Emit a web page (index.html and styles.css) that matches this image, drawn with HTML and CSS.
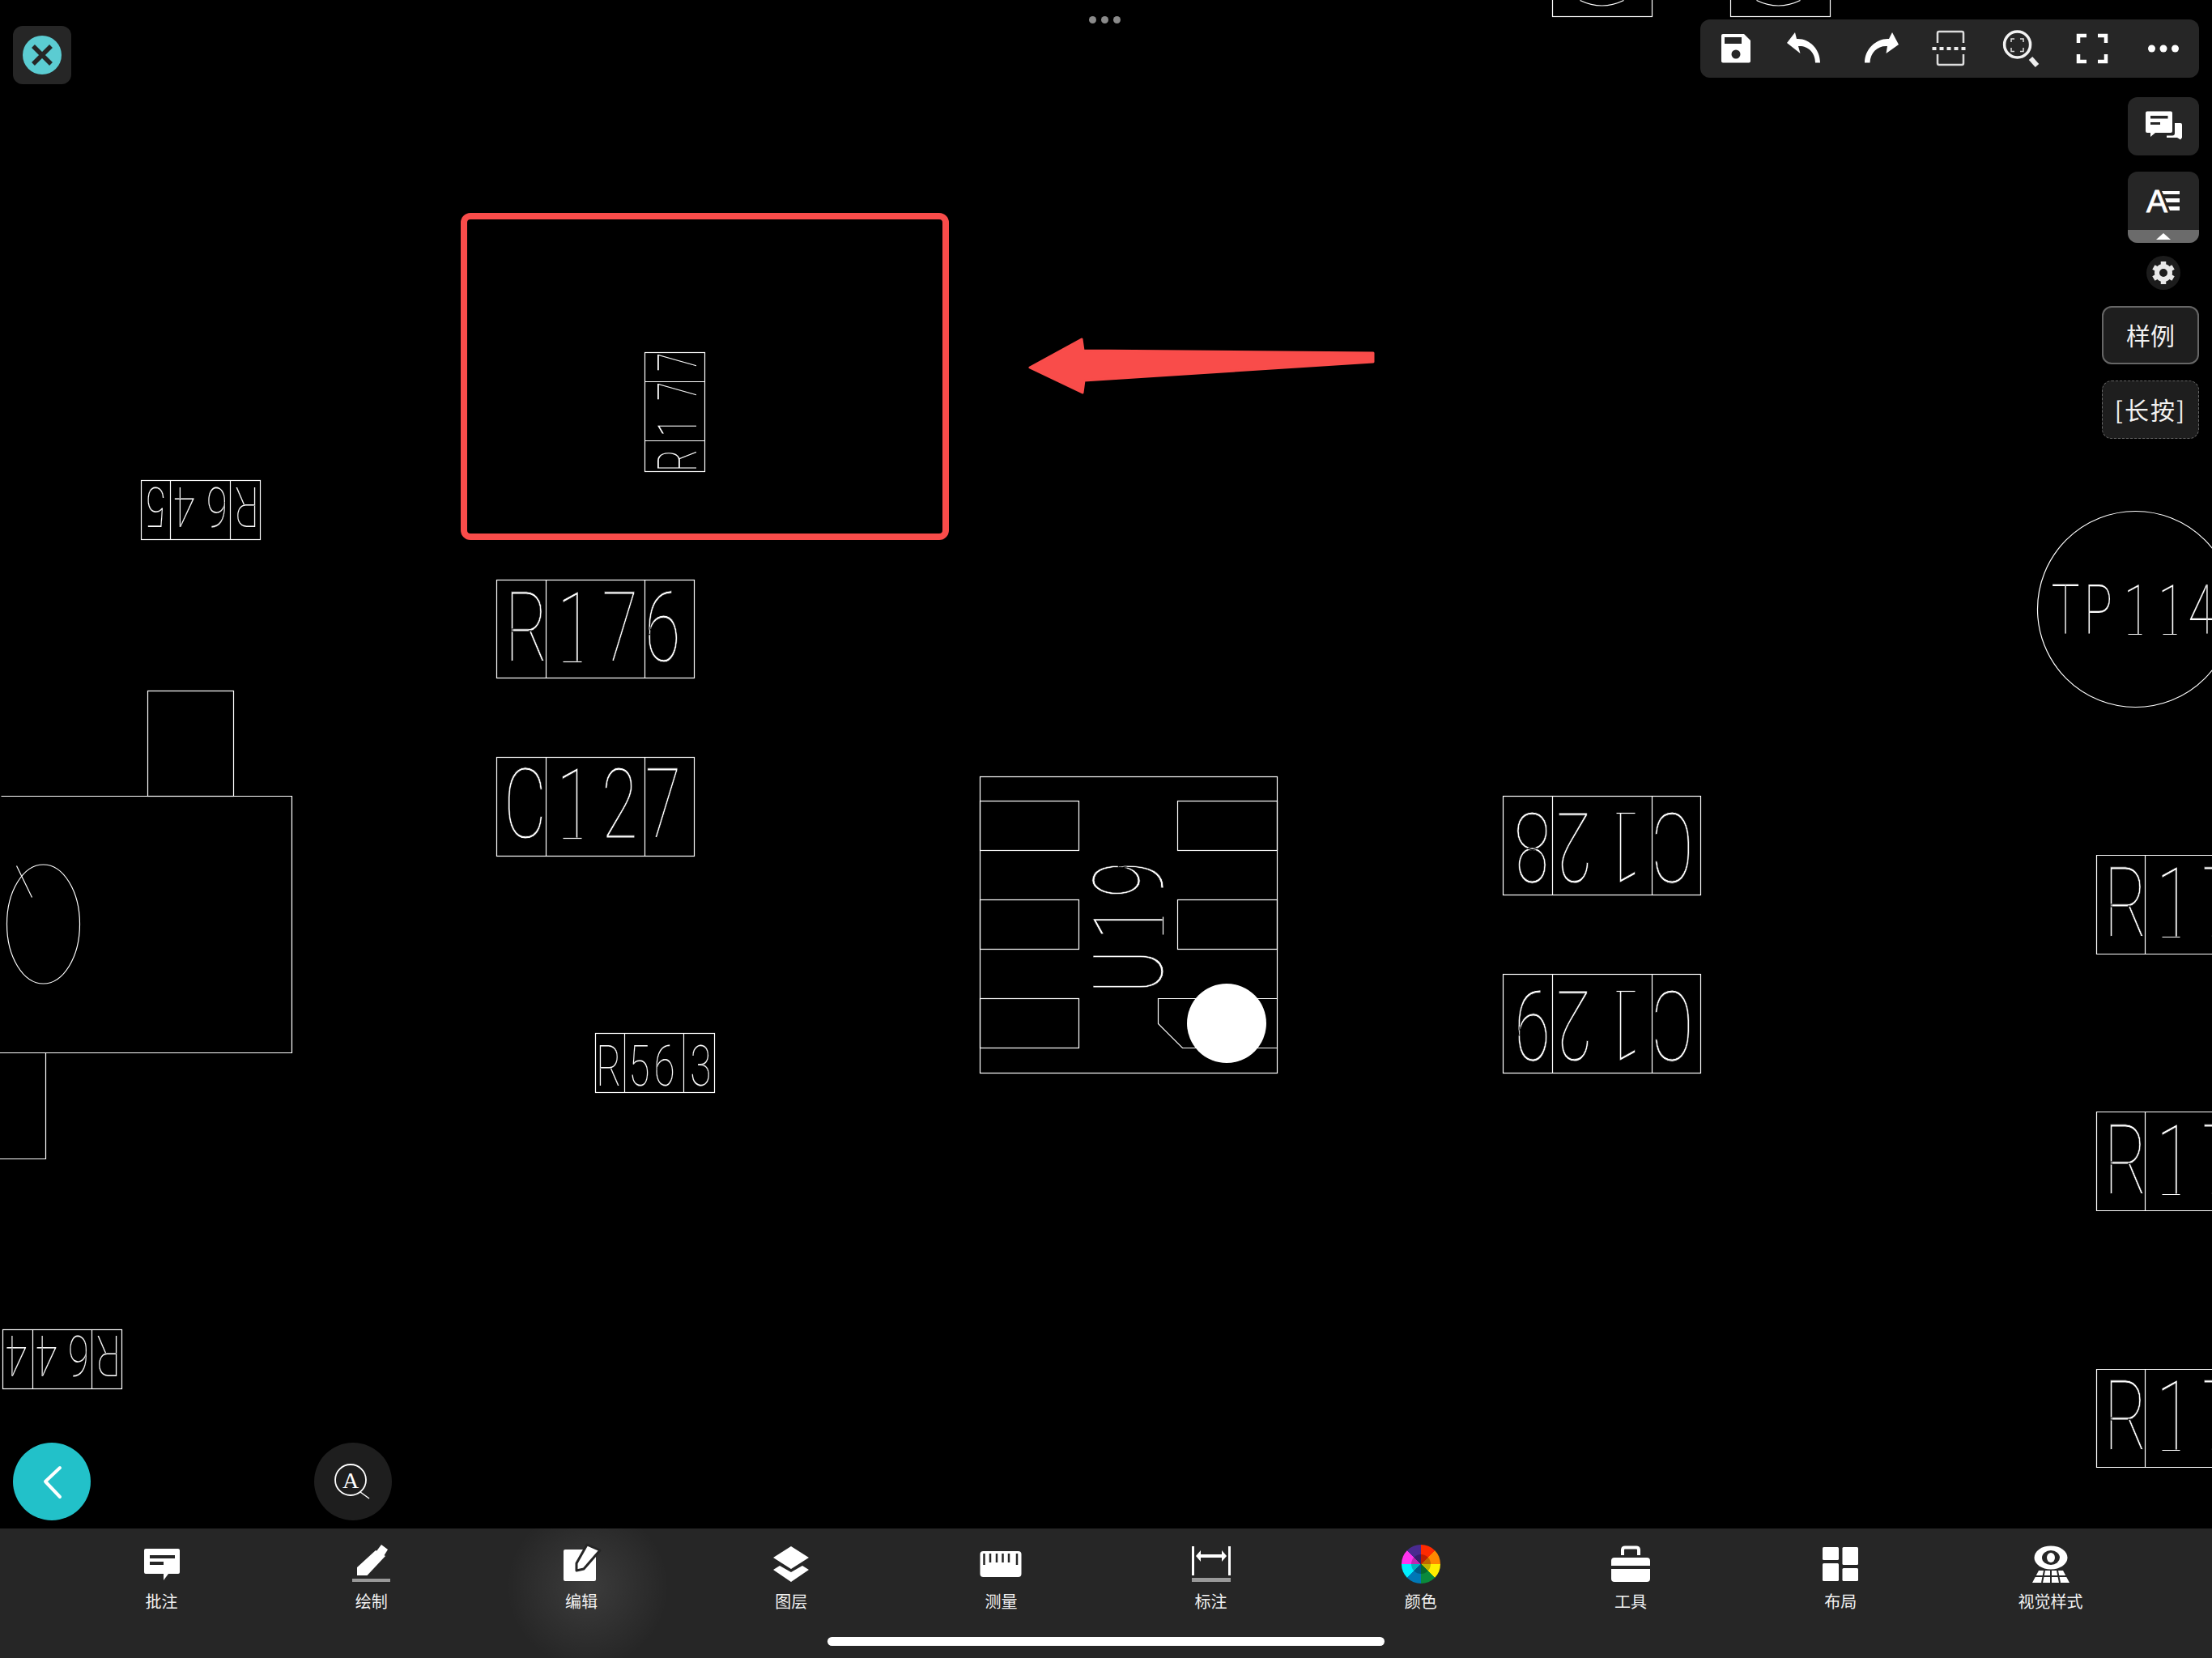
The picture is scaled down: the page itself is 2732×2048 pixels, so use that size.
FILE: index.html
```html
<!DOCTYPE html>
<html lang="zh">
<head>
<meta charset="utf-8">
<title>CAD</title>
<link rel="stylesheet" href="styles.css">
</head>
<body>
<div class="screen">
  <main class="stage">
    <svg class="cad" viewBox="0 0 2732 1888" width="2732" height="1888">
      <g class="glyphs">
        <g class="big" transform="translate(613 817) scale(.68 1)"><text x="16 110 192 269">R176</text></g>
        <g class="big" transform="translate(628 1035) scale(.68 1)"><text x="-9 87 169 248">C127</text></g>
        <g class="bare" transform="translate(860 578) rotate(-90) scale(.35 .563)"><text x="-13 111 238 341">R177</text></g>
        <g class="big" transform="translate(1436 1219) rotate(-90) scale(.68 1)"><text x="-12 85 162">U19</text></g>
        <g class="small" transform="translate(315 602) rotate(180) scale(.4 .575)"><text x="-12 85 184 271">R645</text></g>
        <g class="small" transform="translate(144 1650) rotate(180) scale(.4 .585)"><text x="-12 85 182 275">R644</text></g>
        <g class="small" transform="translate(741 1341) scale(.4 .586)"><text x="-12 88 166 278">R563</text></g>
        <g class="big" transform="translate(2086 1004) rotate(180) scale(.68 1)"><text x="-9 87 176 252">C128</text></g>
        <g class="big" transform="translate(2086 1224) rotate(180) scale(.68 1)"><text x="-9 87 176 252">C129</text></g>
        <g class="small" transform="translate(2535 783) scale(.49 .715)"><text x="-3 79 179 266 342">TP114</text></g>
        <g class="big" transform="translate(2607 1157) scale(.68 1)"><text x="-12 82 165">R17</text></g>
        <g class="big" transform="translate(2607 1475) scale(.68 1)"><text x="-12 82 165">R17</text></g>
        <g class="big" transform="translate(2607 1791) scale(.68 1)"><text x="-12 82 165">R17</text></g>
      </g>

      <g class="lines" transform="translate(.5 .5)">
        <!-- clipped boxes on top edge -->
        <rect x="1917" y="-5" width="123" height="25"/>
        <path d="M1951 0Q1978 13 2005 0"/>
        <rect x="2137" y="-5" width="123" height="25"/>
        <path d="M2169 0Q2196 13 2223 0"/>
        <!-- connector at left -->
        <rect x="182" y="853" width="106" height="130"/>
        <path d="M1 983H360V1300H-2"/>
        <path d="M56 1300V1431H-2"/>
        <ellipse cx="53" cy="1141" rx="45" ry="73.5"/>
        <path d="M20 1069L39 1108"/>
        <!-- R177 -->
        <rect x="796" y="435" width="74" height="147"/>
        <path d="M796 471H870M796 544H870"/>
        <!-- R176 -->
        <rect x="613" y="716" width="244" height="121"/>
        <path d="M674 716V837M796 716V837"/>
        <path d="M695 817H718"/>
        <!-- C127 -->
        <rect x="613" y="935" width="244" height="122"/>
        <path d="M674 935V1057M796 935V1057"/>
        <path d="M695 1035H718"/>
        <!-- R645 -->
        <rect x="174" y="593" width="147" height="73"/>
        <path d="M210 593V666M284 593V666"/>
        <!-- R563 -->
        <rect x="735" y="1276" width="147" height="73"/>
        <path d="M771 1276V1349M844 1276V1349"/>
        <!-- R644 -->
        <rect x="3" y="1642" width="147" height="73"/>
        <path d="M40 1642V1715M113 1642V1715"/>
        <!-- U19 -->
        <rect x="1210" y="959" width="367" height="366"/>
        <rect x="1210" y="989" width="122" height="61"/>
        <rect x="1210" y="1111" width="122" height="61"/>
        <rect x="1210" y="1233" width="122" height="61"/>
        <rect x="1454" y="989" width="123" height="61"/>
        <rect x="1454" y="1111" width="123" height="61"/>
        <path d="M1577 1233H1430V1264L1460 1294H1577"/>
        <path d="M1436 1132V1154"/>
        <!-- C128 C129 -->
        <rect x="1856" y="983" width="244" height="122"/>
        <path d="M1917 983V1105M2040 983V1105"/>
        <path d="M1996 1004H2019"/>
        <rect x="1856" y="1203" width="244" height="122"/>
        <path d="M1917 1203V1325M2040 1203V1325"/>
        <path d="M1996 1224H2019"/>
        <!-- TP114 -->
        <circle cx="2637" cy="752" r="121"/>
        <path d="M2628 783H2645M2671 783H2688"/>
        <!-- R1xx right -->
        <path d="M2740 1056H2589V1178H2740M2649 1056V1178"/>
        <path d="M2740 1373H2589V1495H2740M2649 1373V1495"/>
        <path d="M2740 1691H2589V1812H2740M2649 1691V1812"/>
        <path d="M2670 1157H2692M2670 1475H2692M2670 1791H2692"/>
      </g>

      <circle class="dot" cx="1515" cy="1264" r="49"/>

      <rect class="mark-box" x="573" y="267" width="595" height="396" rx="8"/>
      <path class="mark-arrow" d="M1272 454L1336 419L1338 433L1696 436V447L1339 470L1337 485Z"/>
    </svg>

    <button class="close-btn">
      <svg viewBox="0 0 72 72" width="72" height="72">
        <circle class="close-disc" cx="36" cy="36" r="24"/>
        <path class="close-x" d="M25 25L47 47M47 25L25 47"/>
      </svg>
    </button>

    <div class="drag-dots"><span></span><span></span><span></span></div>

    <nav class="toolbar">
      <svg class="ti" viewBox="0 0 48 48"><path class="w" d="M8 6H34L42 14V39.500A2 2 0 0 1 40 41.500H8A2 2 0 0 1 6 39.500V8A2 2 0 0 1 8 6Z"/><rect class="k" x="10" y="10" width="21" height="8"/><circle class="k" cx="24" cy="31" r="5.500"/></svg>
      <svg class="ti gap-a" viewBox="0 0 48 48"><path class="w" d="M13 4L3 17L19.500 30L17 21C28 20 38 28 38 41.500H44C44 24 30 11 15 12Z"/></svg>
      <svg class="ti gap-b" viewBox="0 0 48 48"><path class="w" d="M37 4L45 19L29.500 30L31 21C20 20 10 28 9.500 41.500H3C3 24 18 11 33 12Z"/></svg>
      <svg class="ti gap-a" viewBox="0 0 48 48"><path class="s" d="M9 17V5A2 2 0 0 1 11 3H39A2 2 0 0 1 41 5V17M9 31V42A2 2 0 0 0 11 44H39A2 2 0 0 0 41 42V31"/><path class="dash" d="M2.500 24H47"/></svg>
      <svg class="ti gap-c" viewBox="0 0 48 48"><circle class="s3" cx="19.600" cy="19" r="16"/><path class="handle" d="M36 36L44 45"/><path class="s1" d="M12 16V12H16M23 12H27V16M27 23V27.500H23M16 27.500H12V23"/></svg>
      <svg class="ti gap-c" viewBox="0 0 48 48"><path class="s4" d="M7 17V8H17M31 8H41V17M41 31V40H31M17 40H7V31"/></svg>
      <svg class="ti gap-c" viewBox="0 0 48 48"><circle class="w" cx="9.500" cy="24" r="4.500"/><circle class="w" cx="24" cy="24" r="4.500"/><circle class="w" cx="38.500" cy="24" r="4.500"/></svg>
    </nav>

    <aside class="side">
      <button class="side-btn">
        <svg class="ti" viewBox="0 0 48 48">
          <path class="w" d="M4 5.500H33A2 2 0 0 1 35 7.500V30A2 2 0 0 1 33 32H14L8 37V32H4A2 2 0 0 1 2 30V7.500A2 2 0 0 1 4 5.500Z"/>
          <rect class="k" x="8" y="11" width="21.500" height="3.500"/><rect class="k" x="8" y="19" width="12" height="3"/>
          <path class="w" d="M38 20H45A2 2 0 0 1 47 22V38L45 40.500L41 38H28V35.500H35A3 3 0 0 0 38 32.500Z"/>
        </svg>
      </button>
      <button class="side-btn side-btn-tall">
        <span class="text-icon">
          <svg class="ti" viewBox="0 0 48 48">
            <text class="a-letter" x="3" y="38">A</text>
            <path class="w" d="M22 12H44V16H24ZM26 21H44V26H28ZM30 31H44V36H32Z"/>
          </svg>
        </span>
        <span class="foot"><i></i></span>
      </button>
      <span class="gear">
        <svg viewBox="0 0 42 42" width="42" height="42">
          <g class="teeth"><path d="M21 7V35M8.900 14L33.100 28M8.900 28L33.100 14"/></g>
          <circle class="gear-ring" cx="21" cy="21" r="8"/>
        </svg>
      </span>
      <button class="label-btn">样例</button>
      <button class="label-btn label-btn-dashed">[长按]</button>
    </aside>

    <button class="back-btn">
      <svg viewBox="0 0 96 96" width="96" height="96"><path class="chev" d="M58 31L40 48L58 67"/></svg>
    </button>
    <button class="find-btn">
      <svg viewBox="0 0 96 96" width="96" height="96">
        <circle class="find-ring" cx="45" cy="46" r="19"/>
        <text class="find-a" x="45" y="56">A</text>
        <path class="find-handle" d="M57 61L68 69"/>
      </svg>
    </button>
  </main>

  <footer class="tabbar">
    <div class="tab">
      <svg class="tab-icon" viewBox="0 0 60 60"><path class="w" d="M10 13H50A2 2 0 0 1 52 15V42A2 2 0 0 1 50 44H38L32 52V44H10A2 2 0 0 1 8 42V15A2 2 0 0 1 10 13Z"/><rect class="k" x="15" y="21" width="31" height="4"/><rect class="k" x="15" y="29" width="17" height="4"/></svg>
      <span class="tab-label">批注</span>
    </div>
    <div class="tab">
      <svg class="tab-icon" viewBox="0 0 60 60"><path class="w" d="M12 46V36L35 15L47 22L24.500 46ZM42 8L50 14L45 22L36 16Z"/><rect class="g" x="6" y="50" width="47" height="4"/></svg>
      <span class="tab-label">绘制</span>
    </div>
    <div class="tab tab-active">
      <svg class="tab-icon" viewBox="0 0 60 60"><rect class="w" x="8" y="14" width="40" height="39" rx="2"/><path class="pen" d="M37 8L53 15L33 38L24 40L24 31Z"/></svg>
      <span class="tab-label">编辑</span>
    </div>
    <div class="tab">
      <svg class="tab-icon" viewBox="0 0 60 60"><path class="w" d="M30 10L52 24L30 38L8 24ZM16 34L30 42L44 34L52 39L30 54L8 39Z"/></svg>
      <span class="tab-label">图层</span>
    </div>
    <div class="tab">
      <svg class="tab-icon" viewBox="0 0 60 60"><rect class="w" x="4.500" y="16" width="51" height="32" rx="4"/><path class="ruler" d="M9.500 19V33M17 19V30M25 19V30M32.500 19V30M40 19V30M50 19V33"/></svg>
      <span class="tab-label">测量</span>
    </div>
    <div class="tab">
      <svg class="tab-icon" viewBox="0 0 60 60"><rect class="w" x="6" y="10" width="3" height="36"/><rect class="w" x="51" y="10" width="3" height="36"/><path class="w" d="M11 22L17 15V20H43V15L49 22L43 29V24H17V29Z"/><rect class="g" x="6" y="49" width="48" height="5"/></svg>
      <span class="tab-label">标注</span>
    </div>
    <div class="tab">
      <div class="wheel"></div>
      <span class="tab-label">颜色</span>
    </div>
    <div class="tab">
      <svg class="tab-icon" viewBox="0 0 60 60"><path class="bag" d="M20 21V14A3 3 0 0 1 23 11.500H37A3 3 0 0 1 40 14V21"/><path class="w" d="M10 24H50A4 4 0 0 1 54 28V34H6V28A4 4 0 0 1 10 24ZM6 38H54V50A4 4 0 0 1 50 54H10A4 4 0 0 1 6 50Z"/></svg>
      <span class="tab-label">工具</span>
    </div>
    <div class="tab">
      <svg class="tab-icon" viewBox="0 0 60 60"><rect class="w" x="8" y="11" width="20" height="16" rx="1.500"/><rect class="w" x="8" y="31" width="20" height="22" rx="1.500"/><rect class="w" x="32.500" y="11" width="19.500" height="22" rx="1.500"/><rect class="w" x="32.500" y="37" width="19.500" height="16" rx="1.500"/></svg>
      <span class="tab-label">布局</span>
    </div>
    <div class="tab">
      <svg class="tab-icon" viewBox="0 0 60 60"><ellipse class="w" cx="31" cy="24" rx="20.500" ry="14.500"/><ellipse class="k" cx="31" cy="24" rx="11" ry="9"/><ellipse class="w" cx="31" cy="24" rx="5" ry="6"/><path class="w" d="M16 40H46L54 55H8Z"/><path class="grid" d="M8 47H54M23 40L20 55M31 40V55M39 40L42 55"/></svg>
      <span class="tab-label">视觉样式</span>
    </div>
    <div class="home-bar"></div>
  </footer>
</div>
</body>
</html>
```
FILE: styles.css
```css
* { box-sizing: border-box; }
html, body { margin: 0; padding: 0; background: #000; }
button { font: inherit; color: inherit; padding: 0; border: 0; }
.screen {
  width: 2732px;
  height: 2048px;
  display: flex;
  flex-direction: column;
  overflow: hidden;
  background: #000;
  font-family: "Noto Sans CJK SC", "Noto Sans", sans-serif;
  color: #fff;
}
.stage { position: relative; flex: 1; }
.cad { position: absolute; left: 0; top: 0; display: block; }
.lines rect, .lines path, .lines circle, .lines ellipse {
  fill: none;
  stroke: #fff;
  stroke-width: 1.2;
}
.glyphs text {
  font-family: Roboto, "Liberation Sans", sans-serif;
  font-weight: 100;
  font-size: 120px;
  fill: #fff;
  stroke: #000;
  vector-effect: non-scaling-stroke;
}
.glyphs .big text { stroke-width: .7px; }
.glyphs .small text { stroke-width: .15px; }
.glyphs .bare text { stroke: none; }
.dot { fill: #fff; }
.mark-box { fill: none; stroke: #f94c4a; stroke-width: 8; }
.mark-arrow { fill: #f94c4a; stroke: #f94c4a; stroke-width: 3; stroke-linejoin: round; }

/* shared icon paints */
.w { fill: #fff; }
.k { fill: #262626; }
.g { fill: #999; }
.s, .s3, .s1, .s4 { fill: none; stroke: #f2f2f2; }
.s { stroke-width: 2.5; stroke: #ddd; }
.s1 { stroke-width: 1.5; stroke: #ddd; }
.s3 { stroke-width: 3.5; }
.s4 { stroke-width: 4.5; stroke: #fff; }
.dash { fill: none; stroke: #eee; stroke-width: 4; stroke-dasharray: 5 4; }
.handle { fill: none; stroke: #eee; stroke-width: 6; }
.ti { width: 48px; height: 48px; display: block; flex: none; }

.close-btn {
  position: absolute;
  left: 16px;
  top: 32px;
  width: 72px;
  height: 72px;
  border-radius: 12px;
  background: #262626;
}
.close-btn svg { display: block; }
.close-disc { fill: #5bccd2; }
.close-x { fill: none; stroke: #262626; stroke-width: 5.5; }

.drag-dots {
  position: absolute;
  left: 1345px;
  top: 20px;
  display: flex;
  gap: 6px;
}
.drag-dots span { width: 9px; height: 9px; border-radius: 50%; background: #8a8a8a; }

.toolbar {
  position: absolute;
  left: 2100px;
  top: 24px;
  width: 616px;
  height: 72px;
  padding-left: 20px;
  display: flex;
  align-items: center;
  gap: 36px;
  background: #262626;
  border-radius: 12px;
}
.gap-b { margin-left: 12px; }
.gap-c { margin-left: 4px; }

.side {
  position: absolute;
  right: 16px;
  top: 120px;
  width: 120px;
  display: flex;
  flex-direction: column;
  align-items: flex-end;
  gap: 20px;
}
.side-btn {
  width: 88px;
  height: 72px;
  background: #262626;
  border-radius: 12px;
  display: flex;
  align-items: center;
  justify-content: center;
}
.side-btn-tall {
  height: 88px;
  flex-direction: column;
  justify-content: space-between;
  overflow: hidden;
}
.text-icon { height: 72px; display: flex; align-items: center; }
.a-letter {
  font-family: "Liberation Sans", sans-serif;
  font-size: 39px;
  fill: #fff;
  stroke: #fff;
  stroke-width: .8;
}
.foot {
  width: 100%;
  height: 16px;
  background: #6b6b6b;
  display: flex;
  align-items: center;
  justify-content: center;
}
.foot i {
  width: 0;
  height: 0;
  border-left: 9px solid transparent;
  border-right: 9px solid transparent;
  border-bottom: 8px solid #fff;
}
.gear {
  width: 42px;
  height: 42px;
  margin: -4px 23px 0 0;
  background: #1c1c1c;
  border-radius: 50%;
}
.gear svg { display: block; }
.teeth path { fill: none; stroke: #e8e8e8; stroke-width: 6.5; }
.gear-ring { fill: #1c1c1c; stroke: #e8e8e8; stroke-width: 6; }
.label-btn {
  width: 120px;
  height: 72px;
  padding-bottom: 3px;
  background: #1e1e1e;
  border: 2px solid #666;
  border-radius: 12px;
  font-size: 30px;
  color: #f2f2f2;
  display: flex;
  align-items: center;
  justify-content: center;
}
.label-btn-dashed { border: 1px dashed #666; letter-spacing: 2px; }

.back-btn, .find-btn {
  position: absolute;
  bottom: 10px;
  width: 96px;
  height: 96px;
  border-radius: 50%;
}
.back-btn svg, .find-btn svg { display: block; }
.back-btn { left: 16px; background: #22c1c9; }
.find-btn { left: 388px; background: #1e1e1e; }
.chev { fill: none; stroke: #fff; stroke-width: 4; stroke-linecap: round; stroke-linejoin: round; }
.find-ring { fill: none; stroke: #fff; stroke-width: 1.8; }
.find-handle { fill: none; stroke: #fff; stroke-width: 1.5; }
.find-a { font-family: "Liberation Serif", serif; font-size: 28px; text-anchor: middle; fill: #fff; }

.tabbar {
  position: relative;
  height: 160px;
  padding: 0 70px;
  background: #262626;
  display: flex;
  flex: none;
}
.tab {
  flex: 1;
  display: flex;
  flex-direction: column;
  align-items: center;
  padding-top: 12px;
}
.tab-active {
  background: radial-gradient(circle 100px at 53% 45%, rgba(255,255,255,.1), rgba(255,255,255,0));
}
.tab-icon { width: 60px; height: 60px; display: block; flex: none; }
.tab-label {
  margin-top: 6px;
  font-size: 20px;
  line-height: 24px;
  color: #f2f2f2;
}
.pen { fill: #fff; stroke: #262626; stroke-width: 3; stroke-linejoin: round; }
.ruler { fill: none; stroke: #262626; stroke-width: 2.5; }
.bag { fill: none; stroke: #fff; stroke-width: 4; }
.grid { fill: none; stroke: #262626; stroke-width: 2; }
.wheel {
  position: relative;
  width: 48px;
  height: 48px;
  margin: 8px 6px 4px;
  border-radius: 50%;
  background: conic-gradient(#ff2a00 0 45deg, #ff8800 45deg 90deg, #ffee00 90deg 135deg, #0a8a3c 135deg 180deg, #0077b6 180deg 225deg, #00eeff 225deg 270deg, #ff33ee 270deg 315deg, #4a2a90 315deg 360deg);
}
.wheel::after {
  content: "";
  position: absolute;
  inset: 12px;
  border-radius: 50%;
  background: rgba(0,0,0,.25);
}
.home-bar {
  position: absolute;
  left: 1022px;
  top: 134px;
  width: 688px;
  height: 11px;
  border-radius: 6px;
  background: #fff;
}
```
